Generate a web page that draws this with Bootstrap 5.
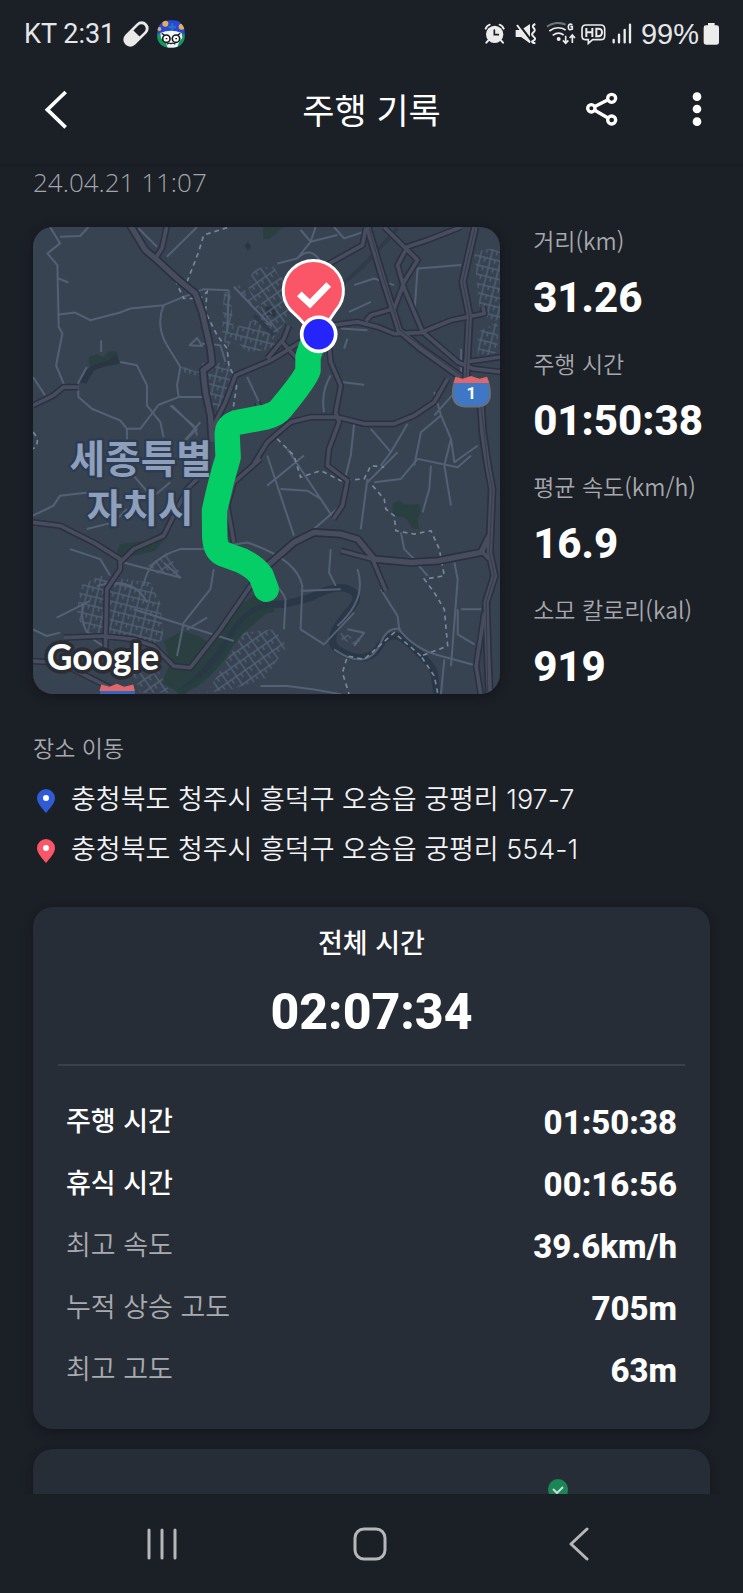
<!DOCTYPE html>
<html lang="ko">
<head>
<meta charset="utf-8">
<meta name="viewport" content="width=device-width, initial-scale=1">
<title>주행 기록</title>
<link href="https://cdn.jsdelivr.net/npm/bootstrap@5.3.0/dist/css/bootstrap.min.css" rel="stylesheet">
<style>
  body { background: #1b1f26; color: #fff; font-family: Roboto, "Noto Sans CJK KR", sans-serif; }
  .kr { font-family: "Noto Sans CJK KR", sans-serif; }
  .num { font-family: Inter, sans-serif; }
  svg { display: block; flex-shrink: 0; }
  .status { height: 68px; padding: 0 24px; font-size: 27px; line-height: 32px; color: #e6e6e8; }
  .pct { font-family: "Liberation Sans", sans-serif; font-size: 29px; }
  .appbar { display: grid; grid-template-columns: 1fr auto 1fr; height: 98px; padding: 0 32px 14px; border-bottom: 2px solid #191c23; }
  .appbar h1 { font-size: 35px; line-height: 44px; font-weight: 400; }
  .appbar .actions { gap: 64px; }
  .iconbtn { background: none; border: 0; padding: 0; color: inherit; }
  .scroller { min-height: 0; overflow-y: auto; scrollbar-width: none; padding: 0 33px; }
  .scroller::-webkit-scrollbar { display: none; }
  .stamp { font-family: "Open Sans", sans-serif; font-size: 26px; line-height: 32px; font-weight: 300; color: #a3a5aa; margin-bottom: 29px; }
  .trip { gap: 33px; }
  .route-map { width: 69%; aspect-ratio: 1; border-radius: 20px; overflow: hidden; box-shadow: 0 2px 10px #14171d; }
  .soft { font-size: 23px; line-height: 26px; font-weight: 350; color: #a6a8ad; white-space: nowrap; }
  .stats { gap: 29px; }
  .stats dd { font-size: 42px; line-height: 50px; font-weight: 800; margin: 20px 0 -2px; }
  .places { margin: 40px 0 33px; }
  .places h2 { margin-bottom: 14px; }
  .places li { font-size: 27px; line-height: 48px; font-weight: 350; gap: 15px; color: #f2f2f3; }
  .places svg { margin: 4px 0 0 3px; }
  .panel { background: #272d36; border-radius: 20px; box-shadow: 0 3px 8px #14171d; }
  .total { margin: 0 25px; padding: 15px 0 24px; border-bottom: 2px solid #3b414a; }
  .total h2 { font-size: 27px; line-height: 40px; font-weight: 500; margin-bottom: 22px; }
  .total p { font-size: 50px; line-height: 56px; font-weight: 800; }
  .details { padding: 26px 33px 27px; }
  .details th { font-size: 27px; font-weight: 350; color: #a9abb0; padding: 0 0 6px; }
  .details th.strong { font-weight: 500; color: #fff; }
  .details td { font-size: 33px; font-weight: 800; text-align: right; padding: 0; }
  .details th, .details td { height: 62px; line-height: 40px; }
  .next { margin-top: 20px; min-height: 180px; padding: 30px 137px; }
  .sysnav { height: 99px; padding: 0 60px 0 58px; color: #b5b7ba; }
  .sysnav button { flex: 1 1 0; }
</style>
</head>
<body>
<div class="d-flex flex-column vh-100">

  <header>
    <div class="status d-flex align-items-center justify-content-between">
      <div class="d-flex align-items-center gap-2">
        <span>KT 2:31</span>
        <svg width="26" height="26" viewBox="377 61 78 78"><g transform="rotate(-45 416 100)"><rect x="371" y="79" width="90" height="42" rx="21" fill="#e9e9ea"/><path d="M418 87h21a13 13 0 0 1 0 26h-21z" fill="#1b1f26"/></g></svg>
        <svg width="28" height="28" viewBox="470 57 84 84">
          <clipPath id="face"><rect x="471" y="58" width="82" height="82" rx="34"/></clipPath>
          <g clip-path="url(#face)"><path fill="#2948d8" d="M470 57h84v84h-84z"/><circle cx="495" cy="68" r="9" fill="#e6ae4d"/><circle cx="544" cy="77" r="9" fill="#e6ae4d"/><circle cx="477" cy="84" r="6" fill="#e6ae4d"/><path d="M505 78h22M516 67v22" stroke="#1c7ac0" stroke-width="6"/><path fill="#14975a" d="M470 98h84v43h-84z"/><path d="M480 96q32-14 64 0l2 14-10 14-6 16h-28l-6-16-14-12z" fill="#f5f5f5"/><g fill="#fff" stroke="#171b20" stroke-width="5"><circle cx="498" cy="113" r="11"/><circle cx="527" cy="113" r="11"/></g><path d="M496 113h5m24 0h5M484 97l8 5m48-5-8 5M500 130q6-6 12-2q7-4 13 2" stroke="#171b20" stroke-width="4" fill="none"/></g>
        </svg>
      </div>
      <div class="d-flex align-items-center gap-1">
        <svg width="26" height="24" viewBox="338 66 78 72" fill="none" stroke="#ececed" stroke-width="6" stroke-linecap="round"><circle cx="370" cy="103" r="26" fill="#ececed" stroke="none"/><path d="M343 86q3-9 12-12M397 86q-3-9-12-12M351 121l-6 7M389 121l6 7"/><path d="M369 90v14h12" stroke="#1b1f26" stroke-width="5"/></svg>
        <svg width="28" height="24" viewBox="428 66 84 72"><path d="M433 90h16l27-18v58l-27-19h-16z" fill="#ececed"/><path d="M441 71l42 55" stroke="#1b1f26" stroke-width="7"/><path d="M437 75l39 52" stroke="#ececed" stroke-width="6"/><path d="M492 72q-12 5-5 12t-1 13t1 13t-1 12t6 8" fill="none" stroke="#ececed" stroke-width="6"/></svg>
        <svg width="31" height="24" viewBox="523 66 93 72" fill="none" stroke="#ececed" stroke-width="6"><path d="M526 80q26-19 56-6" stroke="#707378"/><path d="M533 93q24-18 49-3M543 106q18-13 33-1M602 74q-12-5-12 7t12 6v-7h-6M582 107v22m-8-8 8 9 8-9M602 129v-23m-8 8 8-9 8 9" stroke-width="5"/><circle cx="561" cy="117" r="6" fill="#ececed" stroke="none"/></svg>
        <svg width="26" height="24" viewBox="627 66 78 72" fill="none" stroke="#ececed" stroke-width="5"><path d="M642 75h44q12 0 12 12v20q0 12-12 12h-24l-13 11v-11h-7q-12 0-12-12v-20q0-12 12-12z"/><path d="M643 84v27m18-27v27m-18-14h18M673 86v23h5q12 0 12-12t-12-11z" stroke-width="6"/></svg>
        <svg width="26" height="24" viewBox="719 66 78 72" stroke="#ececed" stroke-width="7" stroke-linecap="round"><path d="M727 120v7M743 104v23M760 90v37M776 74v53"/></svg>
        <span class="pct">99%</span>
        <svg width="16" height="24" viewBox="995 65 48 72" fill="#ececed"><path d="M1010 68h20v7h6q7 0 7 7v43q0 8-8 8h-30q-8 0-8-8v-43q0-7 7-7h6z"/></svg>
      </div>
    </div>
    <div class="appbar align-items-center">
      <div class="d-flex"><button class="iconbtn" type="button" aria-label="뒤로"><svg width="48" height="42" viewBox="99 266 144 126"><path d="M200 278l-55 53 55 53" fill="none" stroke="#fff" stroke-width="11"/></svg></button></div>
      <h1 class="kr m-0">주행 기록</h1>
      <div class="actions d-flex justify-content-end">
        <button class="iconbtn" type="button" aria-label="공유"><svg width="34" height="36" viewBox="643 274 102 108" fill="none" stroke="#fff" stroke-width="10"><path d="M671 321l41-21M671 331l41 24"/><circle cx="662" cy="326" r="11"/><circle cx="723" cy="296" r="12"/><circle cx="723" cy="361" r="12"/></svg></button>
        <button class="iconbtn" type="button" aria-label="더보기"><svg width="28" height="36" viewBox="937 275 84 108" fill="#fff"><circle cx="979" cy="292" r="13"/><circle cx="979" cy="329" r="13"/><circle cx="979" cy="367" r="13"/></svg></button>
      </div>
    </div>
  </header>

  <main class="scroller flex-grow-1">
    <p class="stamp">24.04.21 11:07</p>

    <section class="trip d-flex align-items-start">
      <div class="route-map flex-shrink-0">
        <svg width="100%" height="100%" viewBox="39 36 1398 1398" role="img" aria-label="주행 경로 지도">
          <defs>
            <pattern id="blocks" width="31" height="27" patternUnits="userSpaceOnUse" patternTransform="rotate(14)"><path d="M0 3h31M3 0v27M18 3v12" fill="none" stroke="#506074" stroke-width="4"/></pattern>
            <pattern id="blocks2" width="33" height="30" patternUnits="userSpaceOnUse" patternTransform="rotate(-35)"><path d="M0 3h33M3 0v30M18 3v13" fill="none" stroke="#506074" stroke-width="4"/></pattern>
            <path id="trunk" d="M1040 36L1080 170L1135 345L1200 400L1320 485M1362 36L1325 200L1345 300L1335 490M1380 570L1385 650L1400 750L1413 820L1405 1010L1420 1080L1395 1160L1400 1320L1405 1440M330 30L375 105L405 130L470 190L525 235L545 290L570 400L575 445L548 465L555 530L570 600L575 680M740 1050L820 980L880 950L960 955L1010 970L1060 1030L1170 1040L1250 1035L1380 1010L1405 960"/>
            <path id="main" d="M440 30L425 100L405 130M39 570L100 540L130 515L175 515M575 640L615 560L645 480L750 435L840 380L900 335L1010 320L1070 335L1120 355L1200 352L1290 315L1340 305L1390 295L1385 275M1090 36L1190 135L1150 200L1120 280L1050 300L1035 318M1320 36L1220 75L1160 95L1130 150L1150 220L1205 350L1310 440L1355 460L1440 470M1330 440L1370 435L1437 425M900 160L1025 90L1035 40M740 430L790 370L805 330M780 375L830 430M925 390L930 440L960 510L945 590L955 620L925 700L920 750L980 795L965 870L938 910M700 745L740 680L810 620L870 605L950 605L1030 625L1120 625L1180 600L1240 560L1280 490M710 560L730 610M720 730L640 800L620 870L640 980M39 920L120 930L220 980L300 1030L300 1060L260 1120L255 1330M300 1040L340 1000L430 960L500 820L530 790M130 1265L250 1260L340 1270L400 1290L460 1350L510 1355L600 1240L690 1110L740 1050M960 1005L1055 1030L1095 1125M39 1335L120 1340L200 1380L270 1415M1390 1190L1365 1350L1380 1440M1405 1030L1380 1005"/>
          </defs>
          <path fill="#384352" d="M39 36h1398v1398H39z"/>
          <path fill="#2a4040" d="M205 425l25-8 20 8 15-18 25 2 8 35-45 5-45 5zM728 36h60l-40 35-20 2zM300 985l80-10 50-30 15 10-40 50-90 20-30-5zM1115 865l20-10 20 12 40-2 5 25-10 20 5 30-20-2-20-30-40-10zM430 1275l55-30 50 15 30 20-30 90-60 60-50-30 25-60zM640 1180l60-40 40 10-10 50-60 50-90 100-80 60 60-120z"/>
          <path fill="#2a3643" d="M178 500l20-35 25-18 40-10 25-22 10 30-50 10-25 10-25 40zM735 275h30v30l-30-8zM672 92l10-12 10 15-10 12z"/>
          <path d="M480 1430Q560 1370 620 1280Q680 1160 790 1165L870 1145Q960 1095 1000 1130Q1020 1150 980 1190Q910 1270 950 1300Q1030 1350 1070 1300Q1110 1230 1160 1280Q1230 1340 1240 1370L1248 1440" fill="none" stroke="#293746" stroke-width="22"/>
          <path d="M470 1430Q570 1400 640 1270Q680 1190 760 1180" fill="none" stroke="#27403f" stroke-width="16"/>
          <g fill="url(#blocks)"><path d="M610 230h20l10 120-20 60-15-60zM620 350l60-30 70-20 20 100-90 10zM480 450l50 20 20-30 80 5 5 80-30 80-45-60-5-60-60-10zM1360 110l50-10 27 10v200l-20 10-40-30-10-90zM1370 350l60-30v90l-60 20zM180 1110l60-30 150 20 30 60 10 110-40 20-130-40-50 20-40-70z"/></g>
          <g fill="url(#blocks2)"><path d="M680 210l20-50 60-5 30 60-20 60-70-20zM640 215l20-5 90 100-15 10zM310 1300l80 20 60 110h-90zM620 1330l50-80 90-10 40 50-70 100-100 30-70 10zM380 1050l60-40 40 60-60 10zM730 180l70 10 20 90-60 90-40-80zM960 1250l60 20-10 20-50-20z"/></g>
          <g fill="none" stroke="#536174" stroke-width="6" stroke-linejoin="round">
            <path d="M90 36L120 85L82 115L112 150L116 335L127 355L108 450L135 515M120 65L180 63L205 36M115 190L145 202M118 298L165 292L210 315L300 292L330 280L430 270L490 245L550 222L625 225M430 270Q405 330 440 390L480 455L470 510L475 545L415 568L360 640L320 640L300 615L215 580L175 545L173 505L200 455M300 440L350 450L380 510L380 570L420 620L430 665M39 485L75 540M440 125L530 36M355 40L410 95M243 375V410M508 390L530 368L545 392ZM545 385L600 390L615 440M320 640V680M450 570L530 640M475 545H550M455 570L525 640L530 660M625 225L620 350M680 485L720 570M530 640L490 680M640 215L750 330"/>
            <path d="M1190 160L1320 150M1190 160L1180 300M840 45L870 80L830 130L770 145M885 36L870 80L950 60M940 36L970 70L1030 50M830 130Q870 90 900 140M1000 210L1060 190L1120 210M985 290L1050 260M960 340L1040 345M980 370L970 400M910 590Q900 530 930 480M960 500L1030 508M1240 530L1260 600L1200 650L1180 750M1260 600L1290 670L1270 750M1320 510L1240 600M1000 625L990 720L970 800M1050 640L1110 710L1080 750M1110 710L1160 625M1290 670L1300 740L1370 690M1320 400V480"/>
            <path d="M39 900L100 870L120 840L210 830L260 840M390 850L450 800M340 780L400 850M480 690L540 620M370 1110Q380 1030 480 1000H560L700 1050Q780 1110 795 1150L790 1240M560 1000L680 980Q830 1030 845 1110L840 1240L910 1285L1000 1190M580 1060L570 1120L490 1220L470 1320M110 1205L210 1155M190 1160Q170 1250 250 1290M230 1110Q340 1080 380 1160M310 1040L480 1085L430 1040M340 1180L640 1275M500 1240L560 1205M200 940L280 920L320 880M150 1000L240 1030L270 1080M39 1240L80 1260L120 1250"/>
            <path d="M740 810L850 720M740 720L780 840L820 960M800 700L940 910M780 820L860 825L900 850M880 940L960 870M1040 790L1020 940M1040 800L1090 750L1130 710M1060 800L1140 790L1190 730L1310 755L1350 720M1230 750L1225 820L1205 890M1270 750L1290 870M1140 950L1150 1000L1180 1030M1190 1045L1220 1080M1300 1040L1310 1090L1290 1350M1320 1180H1380M1310 1180V1255L1360 1285M1080 1120L1130 1200L1135 1240Q1180 1300 1260 1320L1370 1350M1270 1330L1260 1434M930 1000L925 1070L945 1110M840 1125L960 1120M940 1300Q1040 1370 1080 1280Q1100 1230 1140 1240M1010 1060Q1040 1150 950 1230M720 1410L800 1410L880 1420L960 1434M980 1240L1030 1250L1000 1290"/>
          </g>
          <path d="M1130 40L1030 150L940 230M700 300L760 360" fill="none" stroke="#303a49" stroke-width="12"/>
          <path d="M620 38L550 60L535 110L500 200M465 195L490 250H540L560 230L555 290L590 360L620 400L625 450L650 500L635 600M39 650Q65 680 39 700M770 670L820 720L840 785L900 765L960 795L1030 790L1050 750L1090 755M1055 810L1090 850L1095 880L1120 900L1125 945L1180 955L1230 945L1255 1000L1270 1080L1210 1090L1240 1130L1270 1180L1280 1290L1200 1320L1240 1380L1250 1430M1200 1320L1120 1250L1030 1330L980 1320L965 1370L985 1434" fill="none" stroke="#77879b" stroke-width="5" stroke-dasharray="14 12"/>
          <g fill="none" stroke-linejoin="round"><use href="#main" stroke="#2b3042" stroke-width="20"/><use href="#trunk" stroke="#2b3042" stroke-width="26"/><use href="#main" stroke="#484d5d" stroke-width="11"/><use href="#trunk" stroke="#484d5d" stroke-width="16"/></g>
          <path d="M1045 40L1082 170L1137 345L1320 480M1361 40L1325 200L1345 300L1335 490M1380 570L1400 750L1414 820L1405 1010L1420 1080L1395 1160L1400 1434" fill="none" stroke="#363b4c" stroke-width="3"/>

          <g class="kr" font-size="116" font-weight="700" fill="#8e9fbb" stroke="#2c3b50" stroke-width="14" stroke-linejoin="round" paint-order="stroke">
            <text x="148" y="772">세종특별</text>
            <text x="200" y="919">자치시</text>
          </g>

          <path d="M880 370L862 425V465Q855 490 780 580Q770 595 735 605L655 620Q618 627 620 660L623 725Q600 800 582 885L583 965Q585 1005 610 1015L665 1035Q705 1055 722 1080L737 1120" fill="none" stroke="#06ce66" stroke-width="76" stroke-linecap="round" stroke-linejoin="round"/>
          <path d="M892 385Q866 335 810 285A90 90 0 1 1 946 285Q913 330 892 385Z" fill="#fb5568" stroke="#fff" stroke-width="9" stroke-linejoin="round"/>
          <path d="M836 236l32 30 56-58" fill="none" stroke="#fff" stroke-width="20"/>
          <circle cx="894" cy="357" r="51" fill="#2424fb" stroke="#fff" stroke-width="11"/>

          <path d="M1302 497Q1294 520 1296 545Q1302 572 1330 573H1374Q1402 570 1406 545Q1408 520 1400 497Z" fill="#3d77c6" stroke="#67717d" stroke-width="6"/>
          <path d="M1298 503L1303 484L1325 490L1350 482L1375 490L1398 484L1404 503Z" fill="#df666b"/>
          <text x="1351" y="550" text-anchor="middle" font-family="Roboto, sans-serif" font-size="50" font-weight="700" fill="#fff">1</text>
          <path d="M240 1423h104v14H240z" fill="#3566bb"/>
          <path d="M238 1425L243 1405L268 1412L290 1403L312 1412L339 1405L344 1425Z" fill="#df666b"/>
          <text x="80" y="1362" font-family="Lato, sans-serif" font-size="106" font-weight="700" fill="#fff" stroke="#2a2d33" stroke-width="22" stroke-linejoin="round" paint-order="stroke">Google</text>
        </svg>
      </div>
      <dl class="stats d-flex flex-column m-0">
        <div><dt class="soft kr">거리(km)</dt><dd>31.26</dd></div>
        <div><dt class="soft kr">주행 시간</dt><dd>01:50:38</dd></div>
        <div><dt class="soft kr">평균 속도(km/h)</dt><dd>16.9</dd></div>
        <div><dt class="soft kr">소모 칼로리(kal)</dt><dd>919</dd></div>
      </dl>
    </section>

    <section class="places kr">
      <h2 class="soft">장소 이동</h2>
      <ul class="list-unstyled m-0">
        <li class="d-flex align-items-center"><svg width="20" height="26" viewBox="0 0 20 26"><path d="M10 1a9 9 0 0 1 9 9c0 5-5 10-9 15C6 20 1 15 1 10a9 9 0 0 1 9-9z" fill="#2f5bd7"/><circle cx="10" cy="10" r="3" fill="#fff"/></svg><span>충청북도 청주시 흥덕구 오송읍 궁평리 <span class="num">197-7</span></span></li>
        <li class="d-flex align-items-center"><svg width="20" height="26" viewBox="0 0 20 26"><path d="M10 1a9 9 0 0 1 9 9c0 5-5 10-9 15C6 20 1 15 1 10a9 9 0 0 1 9-9z" fill="#fb5568"/><circle cx="10" cy="10" r="3" fill="#fff"/></svg><span>충청북도 청주시 흥덕구 오송읍 궁평리 <span class="num">554-1</span></span></li>
      </ul>
    </section>

    <section class="panel">
      <div class="total text-center">
        <h2 class="kr">전체 시간</h2>
        <p class="m-0">02:07:34</p>
      </div>
      <div class="details">
        <table class="w-100">
          <tbody>
            <tr><th scope="row" class="kr strong">주행 시간</th><td>01:50:38</td></tr>
            <tr><th scope="row" class="kr strong">휴식 시간</th><td>00:16:56</td></tr>
            <tr><th scope="row" class="kr">최고 속도</th><td>39.6km/h</td></tr>
            <tr><th scope="row" class="kr">누적 상승 고도</th><td>705m</td></tr>
            <tr><th scope="row" class="kr">최고 고도</th><td>63m</td></tr>
          </tbody>
        </table>
      </div>
    </section>

    <section class="panel next d-flex justify-content-end align-items-start">
      <svg width="30" height="30" viewBox="0 0 30 30"><path d="M2 30L6 15L24 12L28 30Z" fill="#23845a"/><circle cx="15" cy="10" r="10" fill="#1c8555"/><path d="M10 10l4 4 6-6" fill="none" stroke="#c5e2d5" stroke-width="2"/></svg>
    </section>
  </main>

  <nav class="sysnav d-flex align-items-center flex-shrink-0">
    <button class="iconbtn d-flex justify-content-center" type="button" aria-label="최근 앱"><svg width="32" height="34" viewBox="0 0 32 34" stroke="currentColor" stroke-width="3" stroke-linecap="round"><path d="M3 3v28M16 3v28M29 3v28"/></svg></button>
    <button class="iconbtn d-flex justify-content-center" type="button" aria-label="홈"><svg width="34" height="34" viewBox="0 0 34 34" fill="none" stroke="currentColor" stroke-width="3"><rect x="2" y="2" width="30" height="30" rx="9"/></svg></button>
    <button class="iconbtn d-flex justify-content-center" type="button" aria-label="뒤로"><svg width="20" height="34" viewBox="0 0 20 34" fill="none" stroke="currentColor" stroke-width="3" stroke-linecap="round" stroke-linejoin="round"><path d="M18 2L2 17l16 15"/></svg></button>
  </nav>
</div>
<script src="https://cdn.jsdelivr.net/npm/bootstrap@5.3.0/dist/js/bootstrap.bundle.min.js"></script>
</body>
</html>
